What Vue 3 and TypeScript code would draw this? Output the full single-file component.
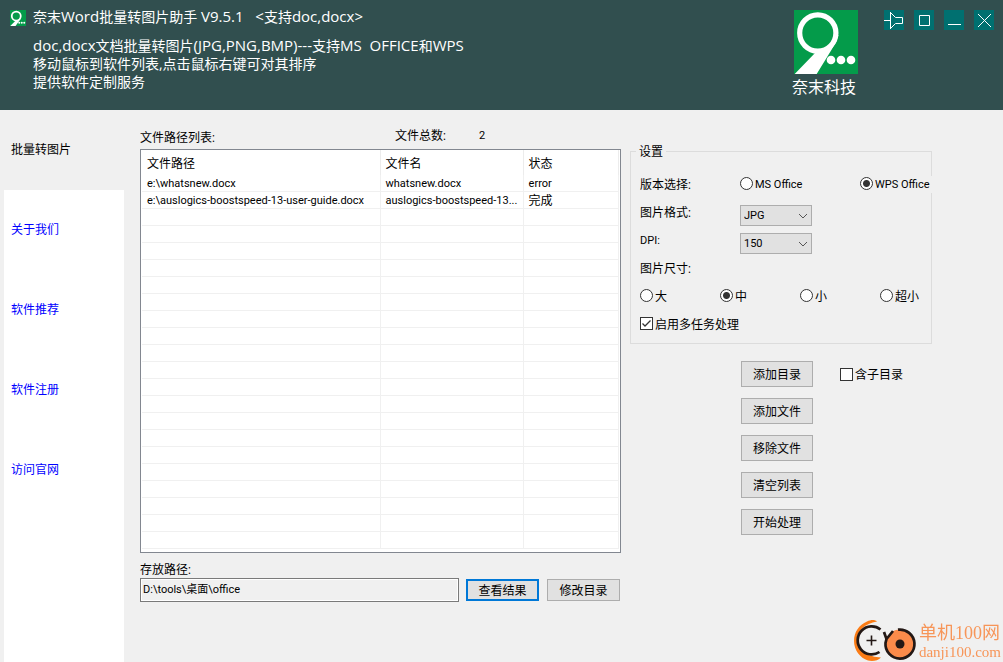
<script setup lang="ts">
import { computed, ref } from 'vue'

interface FileRow {
  path: string
  name: string
  status: string
}

const VISIBLE_ROWS = 22
const NAME_LIMIT = 23

const files = ref<FileRow[]>([
  { path: 'e:\\whatsnew.docx', name: 'whatsnew.docx', status: 'error' },
  {
    path: 'e:\\auslogics-boostspeed-13-user-guide.docx',
    name: 'auslogics-boostspeed-13-user-guide.docx',
    status: '完成',
  },
])
const emptyRows = computed(() => Math.max(0, VISIBLE_ROWS - files.value.length))

function shorten(name: string): string {
  return name.length > NAME_LIMIT ? name.slice(0, NAME_LIMIT) + '...' : name
}

const tabs = ['批量转图片', '关于我们', '软件推荐', '软件注册', '访问官网']
const activeTab = ref(0)

const office = ref('WPS Office')
const format = ref('JPG')
const dpi = ref('150')
const sizes = ['大', '中', '小', '超小']
const size = ref('中')
const multitask = ref(true)
const recursive = ref(false)
const outputPath = ref('D:\\tools\\桌面\\office')
const actions = ['添加目录', '添加文件', '移除文件', '清空列表', '开始处理']
</script>

<template>
  <div class="window">
    <header class="banner">
      <svg class="app-icon" viewBox="0 0 64 64" aria-hidden="true">
        <rect width="64" height="64" fill="#049b4a" />
        <path d="M1 64L22 43L44 28L41 38L22 64Z" fill="#fff" />
        <circle cx="25" cy="24" r="18" fill="#049b4a" stroke="#fff" stroke-width="7" />
        <circle cx="37" cy="51" r="4" fill="#fff" />
        <circle cx="47" cy="51" r="4" fill="#fff" />
        <circle cx="57" cy="51" r="4" fill="#fff" />
      </svg>
      <div class="intro">
        <h1>奈末<span class="en">Word</span>批量转图片助手<span class="en"> V9.5.1 &nbsp; &lt;</span>支持<span class="en">doc,docx&gt;</span></h1>
        <p><span class="en">doc,docx</span>文档批量转图片<span class="en">(JPG,PNG,BMP)---</span>支持<span class="en">MS &nbsp;OFFICE</span>和<span class="en">WPS</span></p>
        <p>移动鼠标到软件列表,点击鼠标右键可对其排序</p>
        <p>提供软件定制服务</p>
      </div>
      <div class="brand">
        <svg class="logo" viewBox="0 0 64 64" aria-hidden="true">
          <rect width="64" height="64" fill="#049b4a" />
          <path d="M0.700 64L22 42L40 26L44.500 25Q43 32 38 39L22.700 64Z" fill="#fff" />
          <circle cx="23.800" cy="23" r="18.100" fill="#049b4a" stroke="#fff" stroke-width="5.200" />
          <circle cx="37" cy="50" r="4.300" fill="#fff" />
          <circle cx="47" cy="50" r="4.300" fill="#fff" />
          <circle cx="57" cy="50" r="4.300" fill="#fff" />
        </svg>
        <span>奈末科技</span>
      </div>
      <div class="controls">
        <button type="button" aria-label="置顶">
          <svg viewBox="0 0 20 20"><path d="M0 10.500H6.500M6.500 2V19M6.500 2.500L11.500 7.500H18.500V13.500H11.500L6.500 18.500" /></svg>
        </button>
        <button type="button" aria-label="最大化">
          <svg viewBox="0 0 20 20"><path d="M5.500 5.500H15.500V15.500H5.500Z" /></svg>
        </button>
        <button type="button" aria-label="最小化">
          <svg viewBox="0 0 20 20"><path d="M4 14.500H17" /></svg>
        </button>
        <button type="button" aria-label="关闭">
          <svg viewBox="0 0 20 20"><path d="M4 4L17 17M17 4L4 17" /></svg>
        </button>
      </div>
    </header>

    <div class="body">
      <nav class="tabs">
        <a
          v-for="(tab, i) in tabs"
          :key="tab"
          href="#"
          :class="{ active: i === activeTab }"
          @click.prevent="activeTab = i"
        >{{ tab }}</a>
      </nav>

      <main class="content">
        <section class="files">
          <div class="list-head">
            <span id="list-label">文件路径列表:</span>
            <span class="total">文件总数:</span>
            <output>{{ files.length }}</output>
          </div>
          <div class="list">
            <table aria-labelledby="list-label">
              <colgroup>
                <col class="col-path" />
                <col class="col-name" />
                <col class="col-status" />
              </colgroup>
              <thead>
                <tr><th>文件路径</th><th>文件名</th><th>状态</th></tr>
              </thead>
              <tbody>
                <tr v-for="file in files" :key="file.path">
                  <td>{{ file.path }}</td>
                  <td :title="file.name">{{ shorten(file.name) }}</td>
                  <td :class="{ cjk: file.status === '完成' }">{{ file.status }}</td>
                </tr>
                <tr v-for="n in emptyRows" :key="n"><td></td><td></td><td></td></tr>
              </tbody>
            </table>
          </div>
          <label class="path-label" for="output-path">存放路径:</label>
          <div class="output">
            <input id="output-path" v-model="outputPath" type="text" readonly />
            <button type="button" class="btn primary">查看结果</button>
            <button type="button" class="btn">修改目录</button>
          </div>
        </section>

        <section class="side">
          <fieldset>
            <legend>设置</legend>
            <div class="row">
              <span class="caption">版本选择:</span>
              <label class="choice office"><input v-model="office" type="radio" name="office" value="MS Office" />MS Office</label>
              <label class="choice office"><input v-model="office" type="radio" name="office" value="WPS Office" />WPS Office</label>
            </div>
            <div class="row">
              <label class="caption" for="format">图片格式:</label>
              <span class="select">
                <select id="format" v-model="format"><option>JPG</option><option>PNG</option><option>BMP</option></select>
                <svg viewBox="0 0 10 6" aria-hidden="true"><path d="M1 1L5 5L9 1" /></svg>
              </span>
            </div>
            <div class="row">
              <label class="caption latin" for="dpi">DPI:</label>
              <span class="select">
                <select id="dpi" v-model="dpi"><option>96</option><option>150</option><option>300</option></select>
                <svg viewBox="0 0 10 6" aria-hidden="true"><path d="M1 1L5 5L9 1" /></svg>
              </span>
            </div>
            <div class="row"><span class="caption">图片尺寸:</span></div>
            <div class="row">
              <label v-for="s in sizes" :key="s" class="choice size"><input v-model="size" type="radio" name="size" :value="s" />{{ s }}</label>
            </div>
            <div class="row">
              <label class="choice"><input v-model="multitask" type="checkbox" />启用多任务处理</label>
            </div>
          </fieldset>

          <div class="actions">
            <div class="stack">
              <button v-for="action in actions" :key="action" type="button" class="btn">{{ action }}</button>
            </div>
            <label class="choice"><input v-model="recursive" type="checkbox" />含子目录</label>
          </div>
        </section>
      </main>
    </div>

    <div class="watermark">
      <svg viewBox="0 0 64 44" aria-hidden="true">
        <path d="M23 3.500C21 1.500 17 1.500 13 3.500C5 7 0 14 0 23C0 32 6 40 14 42.500C18 43.500 24 43 27 39.500C15 39 3 33 3 22C3 12 11 6 23 3.500Z" fill="#fb7c16" />
        <path d="M25.500 34A14 14 0 1 1 26.500 11.500" fill="none" stroke="#231815" stroke-width="2.700" />
        <path d="M12.500 22.500H22.500M17.500 17.500V27.500" stroke="#231815" stroke-width="1.600" />
        <circle cx="46" cy="26" r="14.500" fill="#fc8b4a" />
        <path d="M44 11.700A14.500 14.500 0 1 1 31.500 25L32.500 21L30 14M32.500 21L39 13" fill="none" stroke="#231815" stroke-width="2.700" />
        <circle cx="46" cy="26" r="4.500" fill="#231815" />
      </svg>
      <div>
        <span class="site">单机100网</span>
        <span class="domain">danji100.com</span>
      </div>
    </div>
  </div>
</template>

<style>
body {
  margin: 0;
  background: #f0f0f0;
}
</style>

<style scoped>
.window {
  display: flex;
  flex-direction: column;
  min-height: 100vh;
  background: #f0f0f0;
  color: #000;
  font: 12px/16px Roboto, 'Noto Sans CJK SC', sans-serif;
}
button,
input,
select {
  box-sizing: border-box;
  margin: 0;
  color: inherit;
  font: inherit;
}

.banner {
  display: flex;
  align-items: flex-start;
  box-sizing: border-box;
  min-height: 110px;
  padding: 8px 9px 8px 10px;
  background: #314f4f;
  color: #fff;
  font: 14px/18px 'Open Sans', 'Noto Sans CJK SC', sans-serif;
}
.app-icon {
  width: 16px;
  height: 16px;
  margin: 2px 7px 0 0;
}
.intro {
  flex: 1;
}
.intro h1 {
  margin: 0 0 11px;
  font-size: 14px;
  font-weight: 400;
}
.intro p {
  margin: 0;
}
.en {
  font-size: 15px;
  line-height: 1;
}
.brand {
  display: flex;
  flex-direction: column;
  width: 66px;
  margin: 2px 26px 0 0;
  font-size: 16px;
  line-height: 26px;
}
.logo {
  align-self: flex-end;
  width: 64px;
  height: 64px;
}
.controls {
  display: flex;
  gap: 10px;
  margin-top: 2px;
}
.controls button {
  width: 20px;
  height: 20px;
  padding: 0;
  border: 0;
  background: #007070;
}
.controls svg {
  display: block;
  fill: none;
  stroke: #fff;
}

.body {
  display: flex;
  flex: 1;
}
.tabs {
  display: flex;
  flex-direction: column;
  width: 120px;
  margin-left: 4px;
  background: #fff;
}
.tabs a {
  height: 80px;
  padding-left: 7px;
  color: #00f;
  line-height: 80px;
  text-decoration: none;
}
.tabs .active {
  background: #f0f0f0;
  color: #000;
}

.content {
  display: grid;
  flex: 1;
  grid-template-columns: minmax(0, 1fr) 302px;
  gap: 9px;
  padding: 18px 71px 18px 16px;
}
.list-head {
  display: grid;
  grid-template-columns: 255px 84px 1fr;
  align-items: start;
  height: 21px;
}
.list-head #list-label {
  padding-top: 2px;
}
.list-head output {
  font-size: 11px;
}
.list {
  box-sizing: border-box;
  height: 404px;
  overflow: hidden;
  padding: 0 1px;
  border: 1px solid #828790;
  background: #fff;
}
table {
  width: 100%;
  border-collapse: separate;
  border-spacing: 0;
  table-layout: fixed;
}
.col-path {
  width: 50%;
}
.col-name {
  width: 30%;
}
.col-status {
  width: 20%;
}
th {
  box-sizing: border-box;
  height: 25px;
  padding: 2px 0 0 5px;
  border-right: 1px solid #ececec;
  font-weight: 400;
  text-align: left;
}
td {
  box-sizing: border-box;
  height: 17px;
  overflow: hidden;
  padding: 2px 0 0 5px;
  border-right: 1px solid #f0f0f0;
  border-bottom: 1px solid #f0f0f0;
  font-size: 11px;
  line-height: 14px;
  white-space: nowrap;
}
td.cjk {
  font-size: 12px;
}
.path-label {
  display: block;
  padding-top: 1px;
  margin-top: 9px;
  line-height: 15px;
}
.output {
  display: flex;
  align-items: center;
  gap: 7px;
  margin-right: 1px;
}
.output input {
  flex: 1;
  min-width: 0;
  height: 24px;
  padding: 0 2px 5px;
  border: 1px solid #7a7a7a;
  outline: 0;
  background: #f0f0f0;
  box-shadow: inset 0 0 0 1px #fff;
  font-size: 11px;
}
.btn {
  width: 73px;
  height: 26px;
  padding: 2px 0 0;
  border: 1px solid #adadad;
  background: #e1e1e1;
}
.output .btn {
  height: 22px;
}
.output .btn:last-child {
  margin-left: 1px;
}
.btn.primary {
  border: 2px solid #0078d7;
}

.side {
  padding-top: 14px;
}
fieldset {
  min-width: 0;
  margin: 0;
  padding: 10px 0 5px 9px;
  border: 1px solid #dcdcdc;
}
legend {
  margin-left: -4px;
  padding: 2px 3px 0;
}
.row {
  display: flex;
  align-items: center;
  height: 28px;
}
.caption {
  width: 100px;
  padding-top: 1px;
}
.latin {
  font-size: 11px;
}
.choice {
  display: flex;
  align-items: center;
  gap: 2px;
  padding-top: 1px;
  white-space: nowrap;
}
.office {
  width: 120px;
  background: #f0f0f0;
  font-size: 11px;
}
.office:last-child {
  flex: 1;
  margin-right: -1px;
}
.size {
  width: 80px;
}
.size:last-child {
  width: auto;
}
.choice input {
  flex: none;
  width: 13px;
  height: 13px;
  margin-bottom: 2px;
  border: 1px solid #333;
  appearance: none;
  background: #fff;
}
.choice input[type='radio'] {
  border-radius: 50%;
}
.choice input[type='radio']:checked {
  background: radial-gradient(circle, #333 3px, #fff 4px);
}
.choice input[type='checkbox']:checked {
  background: #fff
    url("data:image/svg+xml,%3Csvg xmlns='http://www.w3.org/2000/svg' viewBox='0 0 11 11'%3E%3Cpath d='M1.500 5.500L4 8L9.500 2.500' fill='none' stroke='%23333' stroke-width='1.300'/%3E%3C/svg%3E");
}
.select {
  display: grid;
  align-self: flex-end;
  width: 72px;
}
.select select {
  grid-area: 1 / 1;
  height: 21px;
  padding: 0 3px;
  border: 1px solid #adadad;
  border-radius: 0;
  appearance: none;
  background: #e1e1e1;
  font-size: 11px;
}
.select svg {
  grid-area: 1 / 1;
  align-self: center;
  justify-self: end;
  width: 10px;
  height: 6px;
  margin-right: 4px;
  fill: none;
  pointer-events: none;
  stroke: #555;
}

.actions {
  display: flex;
  align-items: flex-start;
  gap: 27px;
  padding: 17px 0 0 111px;
}
.stack {
  display: flex;
  flex-direction: column;
  gap: 11px;
}
.stack .btn {
  width: 72px;
}
.actions .choice {
  height: 26px;
}

.watermark {
  position: fixed;
  right: 2px;
  bottom: 0;
  display: flex;
  gap: 1px;
  color: #f79558;
  font-family: 'Liberation Serif', 'Noto Sans CJK SC', serif;
  white-space: nowrap;
}
.watermark svg {
  width: 64px;
  height: 44px;
}
.watermark span {
  display: block;
}
.site {
  padding-top: 2px;
  font-size: 18px;
  line-height: 26px;
}
.domain {
  font-size: 15px;
  line-height: 12px;
}
</style>
